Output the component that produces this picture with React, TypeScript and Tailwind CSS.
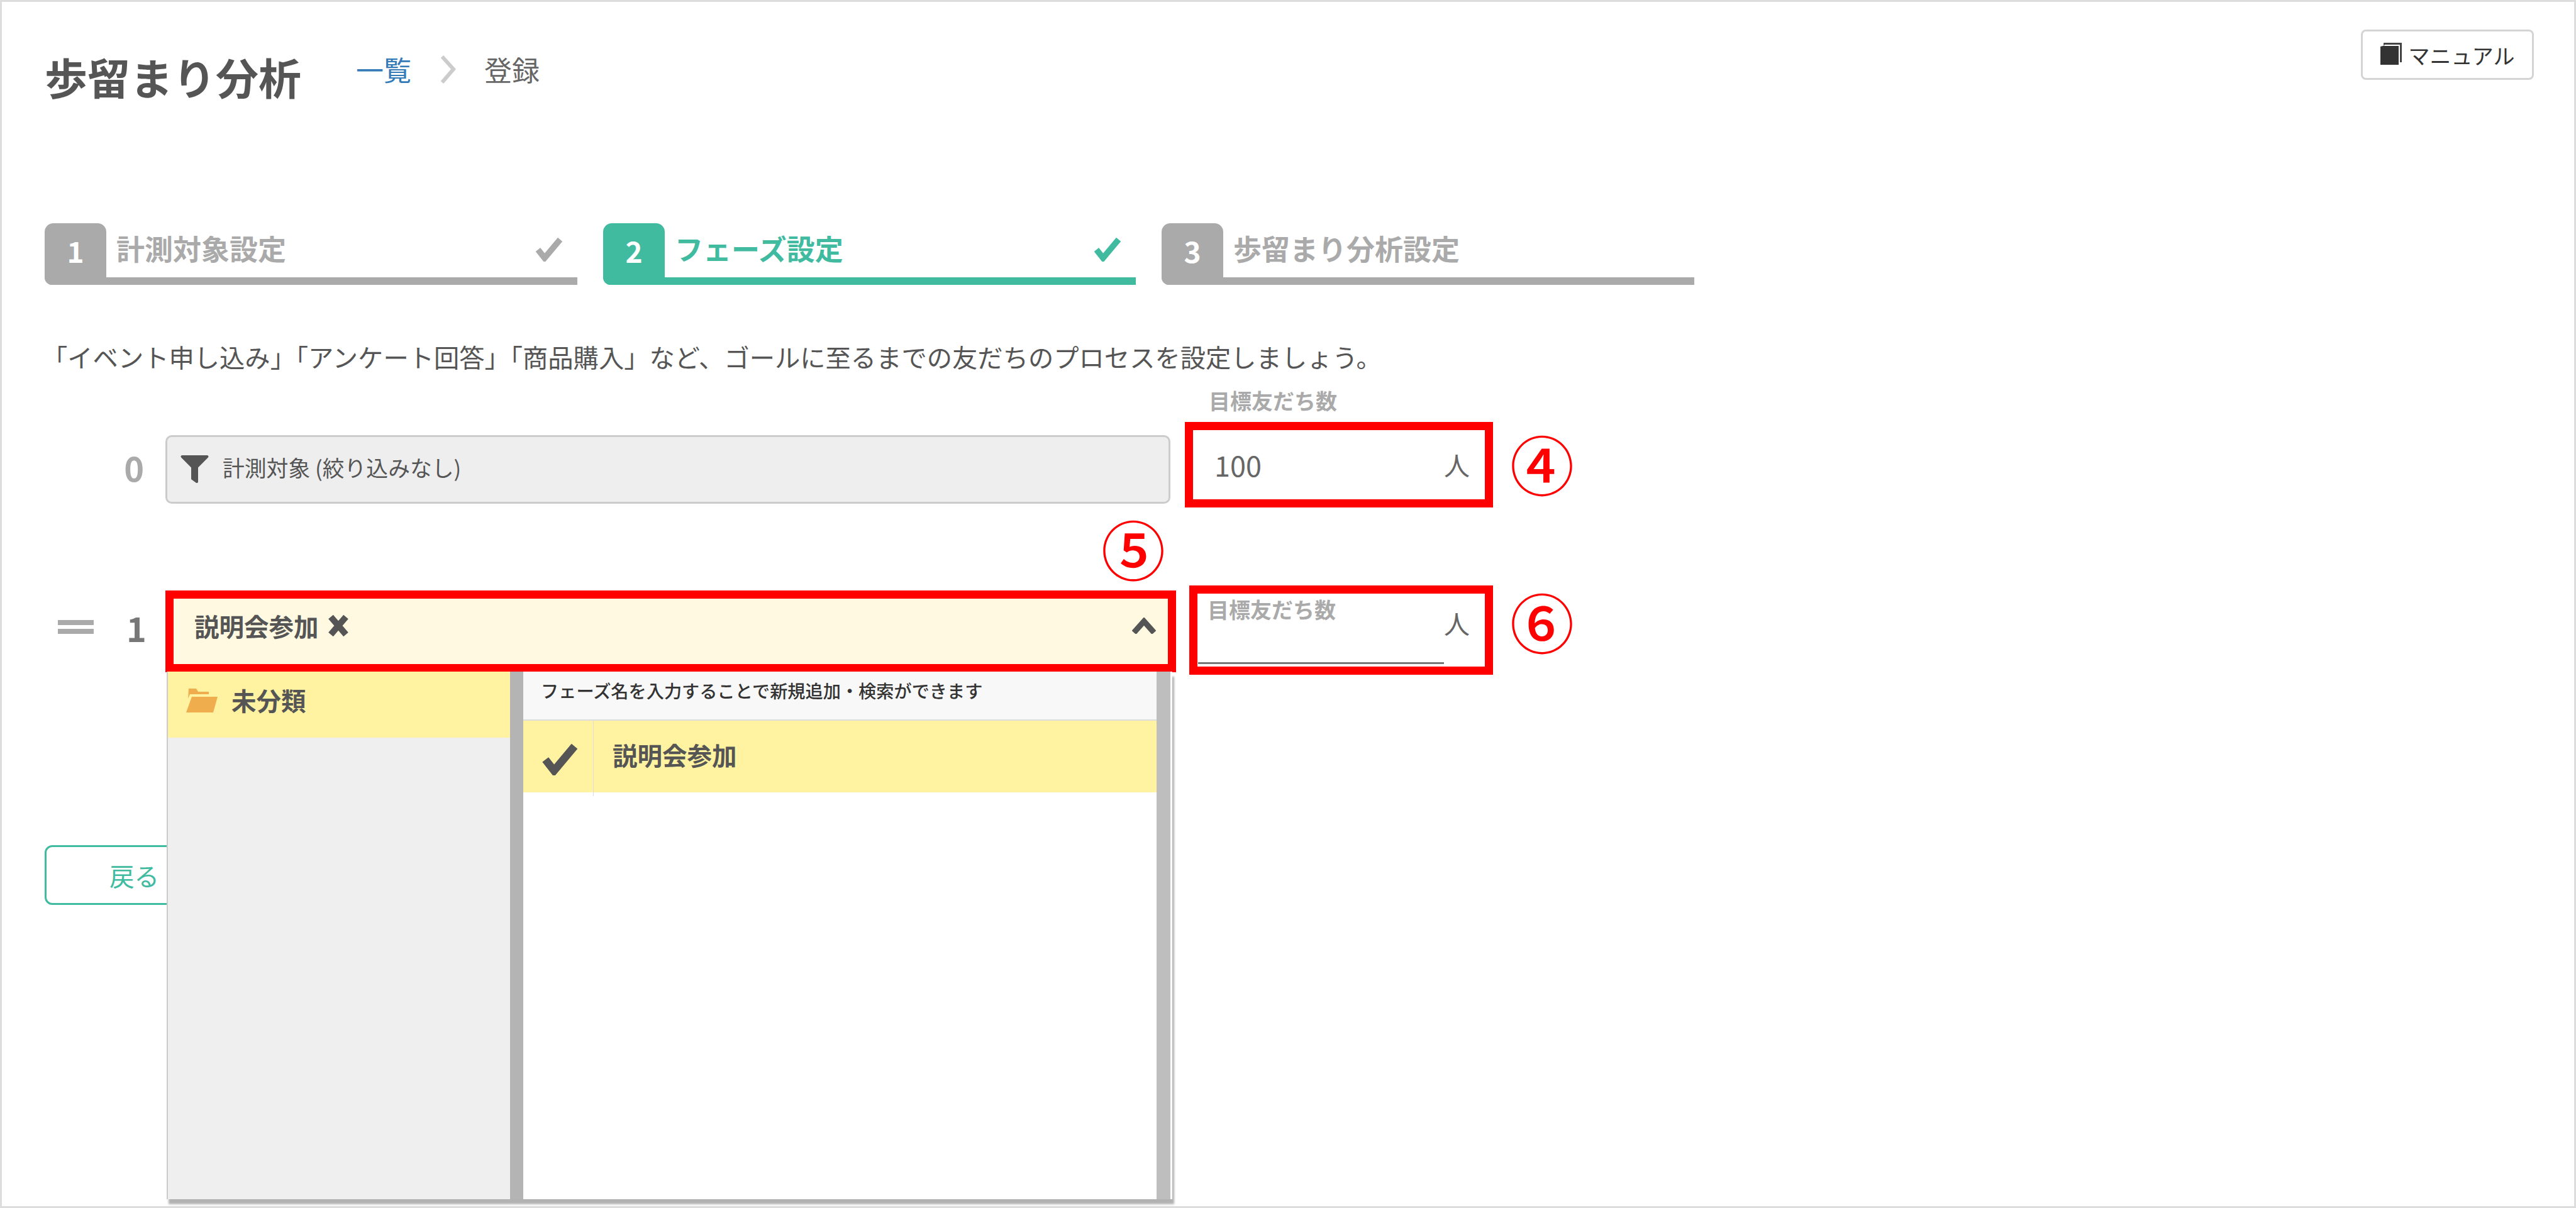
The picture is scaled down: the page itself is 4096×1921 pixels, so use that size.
import React from "react";
import { FaFilter } from "react-icons/fa";

const steps = [
  { num: "1", label: "計測対象設定", done: true, active: false },
  { num: "2", label: "フェーズ設定", done: true, active: true },
  { num: "3", label: "歩留まり分析設定", done: false, active: false },
];

function Check({ className }: { className: string }) {
  return (
    <svg viewBox="0 0 48 40" className={className} fill="none" stroke="currentColor" strokeWidth="10">
      <path d="M5 20 L16 34 L42 3" />
    </svg>
  );
}

function Marker({ children, className }: { children: React.ReactNode; className: string }) {
  return (
    <span className={`absolute flex h-[96px] w-[96px] items-center justify-center text-[102px] leading-none font-medium text-[#f00] ${className}`}>
      {children}
    </span>
  );
}

export default function App() {
  return (
    <div className="relative box-border h-[1921px] w-[4096px] overflow-hidden border-[3px] border-[#ddd] bg-white pt-[44px] pl-[68px] font-['Noto_Sans_CJK_JP',sans-serif] text-[#555]">
      {/* Header */}
      <div className="flex h-[80px] w-[3958px] items-start justify-between">
        <div className="flex items-center pt-[35px]">
          <h1 className="w-[495px] text-[68px] leading-[80px] font-bold whitespace-nowrap">歩留まり分析</h1>
          <a className="mt-[-24px] text-[44px] leading-[60px] text-[#337ab7]">一覧</a>
          <svg viewBox="0 0 27 45" className="mt-[-24px] ml-[45px] h-[45px] w-[27px]" fill="none" stroke="#ccc" strokeWidth="6">
            <path d="M4 2 L22 22 L4 43" />
          </svg>
          <span className="mt-[-24px] ml-[44px] text-[44px] leading-[60px] text-[#666]">登録</span>
        </div>
        <button className="flex h-[80px] w-[275px] items-center justify-center gap-[11px] rounded-[8px] border-[3px] border-[#d4d4d4] text-[34px] text-[#333]">
          <svg viewBox="0 0 34 35" className="mt-[-4px] h-[35px] w-[34px]">
            <path d="M5 0 H34 V31 H31 V3 H7 L5 5 Z" fill="#444" />
            <path d="M0 6 L4 5 H29 V35 H0 Z" fill="#333" />
          </svg>
          <span>マニュアル</span>
        </button>
      </div>

      {/* Steps */}
      <div className="mt-[228px] flex gap-[41px]">
        {steps.map((s) => (
          <div key={s.num} className={`relative flex h-[98px] w-[847px] border-b-[12px] ${s.active ? "border-[#40bba0] text-[#40bba0]" : "border-[#aaa] text-[#aaa]"} rounded-bl-[12px]`}>
            <div className={`mb-[-12px] flex w-[98px] items-center justify-center rounded-t-[14px] rounded-bl-[12px] pb-[12px] text-[46px] font-bold text-white ${s.active ? "bg-[#40bba0]" : "bg-[#aaa]"}`}>
              {s.num}
            </div>
            <span className="ml-[16px] text-[45px] leading-[80px] font-bold whitespace-nowrap">{s.label}</span>
            {s.done && <Check className="absolute top-[23px] right-[20px] h-[38px] w-[49px]" />}
          </div>
        ))}
      </div>

      <p className="mt-[89px] ml-[-4px] h-[50px] text-[40.3px] leading-[50px] whitespace-nowrap">
        「イベント申し込み」「アンケート回答」「商品購入」など、ゴールに至るまでの友だちのプロセスを設定しましょう。
      </p>

      {/* Phase 0 */}
      <div className="relative mt-[79px] flex">
        <span className="absolute top-[-56px] left-[1851px] text-[34px] leading-[44px] font-bold text-[#aaa]">目標友だち数</span>
        <span className="mt-[21px] flex h-[101px] w-[192px] items-center justify-end pr-[34px] text-[54px] font-bold text-[#aaa]">0</span>
        <div className="mt-[21px] flex h-[109px] w-[1598px] items-center rounded-[10px] border-[3px] border-[#ccc] bg-[#eee] pb-[6px] pl-[20px] text-[34.8px]">
          <FaFilter className="mt-[4px] mr-[21px] h-[44px] w-[47px] text-[#555]" />
          <span>計測対象 (絞り込みなし)</span>
        </div>
        <div className="ml-[23px] flex h-[136px] w-[490px] items-center justify-between border-[13px] border-[#f00] pr-[24px] pl-[34px] text-[#666]">
          <span className="text-[45px]">100</span>
          <span className="text-[41px]">人</span>
        </div>
        <Marker className="top-[17px] left-[2333px]">④</Marker>
      </div>

      {/* Phase 1 */}
      <div className="relative mt-[124px] flex">
        <div className="mt-[8px] flex h-[130px] w-[192px] items-center pb-[14px] pl-[21px]">
          <div className="flex w-[57px] flex-col gap-[6px]">
            <div className="h-[8px] bg-[#aaa]" />
            <div className="h-[8px] bg-[#aaa]" />
          </div>
          <span className="ml-[52px] text-[54px] font-bold text-[#777]">1</span>
        </div>
        <div className="relative mt-[8px] flex h-[130px] w-[1607px] items-center justify-between border-[13px] border-[#f00] bg-[#fef9e0] pr-[19px] pb-[18px] pl-[33px]">
          <div className="flex items-center gap-[14px]">
            <span className="text-[39.5px] font-bold">説明会参加</span>
            <svg viewBox="0 0 34 34" className="h-[34px] w-[34px]" fill="none" stroke="#555" strokeWidth="10">
              <path d="M5 3 L29 31 M29 3 L5 31" />
            </svg>
          </div>
          <svg viewBox="0 0 38 26" className="h-[26px] w-[38px]" fill="none" stroke="#555" strokeWidth="9">
            <path d="M3 24 L19 6 L35 24" />
          </svg>
        </div>
        <div className="ml-[21px] flex h-[142px] w-[483px] flex-col border-[13px] border-[#f00] pl-[1px]">
          <div className="flex items-start justify-between pt-[3px] pr-[24px] pl-[15px]">
            <span className="text-[34px] leading-[44px] font-bold text-[#aaa]">目標友だち数</span>
            <span className="mt-[21px] text-[41px] leading-[44px] text-[#666]">人</span>
          </div>
          <div className="mt-auto mb-[4px] h-[3px] w-[391px] bg-[#777]" />
        </div>
        <Marker className="top-[-108px] left-[1683px]">⑤</Marker>
        <Marker className="top-[8px] left-[2333px]">⑥</Marker>

        {/* Dropdown panel */}
        <div className="absolute top-[137px] left-[194px] z-10 flex h-[839px] w-[1599px] border-l-2 border-[#ccc] bg-white shadow-[3px_8px_3px_rgba(0,0,0,0.3)]">
          <div className="w-[544px] bg-[#efefef]">
            <div className="flex h-[105px] items-start bg-[#fff2a0] pt-[22px] pl-[27px] text-[39.5px] font-bold">
              <svg viewBox="0 0 52 38" className="mt-[5px] mr-[22px] h-[38px] w-[52px]" fill="#f0ad4e">
                <path d="M6 0 H18 L21 5 H38 V9 H8 L5 16 Z" />
                <path d="M11 13 H52 L45 38 H2 Z" />
              </svg>
              <span className="leading-[46px]">未分類</span>
            </div>
          </div>
          <div className="w-[21px] bg-[#b4b4b4]" />
          <div className="flex-1">
            <div className="flex h-[78px] items-center border-b-[2px] border-[#ddd] bg-[#f8f8f8] pb-[16px] pl-[28px] text-[28.2px] font-medium text-[#333]">
              フェーズ名を入力することで新規追加・検索ができます
            </div>
            <div className="flex h-[114px] bg-[#fff2a0]">
              <div className="flex h-[120px] w-[112px] justify-center border-r border-[#ddd] pt-[37px] pl-[6px]">
                <Check className="h-[50px] w-[62px] text-[#555]" />
              </div>
              <span className="pt-[30px] pl-[30px] text-[39.5px] leading-[48px] font-bold">説明会参加</span>
            </div>
          </div>
          <div className="w-[22px] bg-[#bebebe]" />
          <div className="w-[3px]" />
        </div>
      </div>

      <button className="mt-[271px] flex h-[95px] w-[430px] items-center rounded-[12px] border-[3px] border-[#40bba0] pl-[100px] text-[39.5px] text-[#40bba0]">
        戻る
      </button>
    </div>
  );
}
